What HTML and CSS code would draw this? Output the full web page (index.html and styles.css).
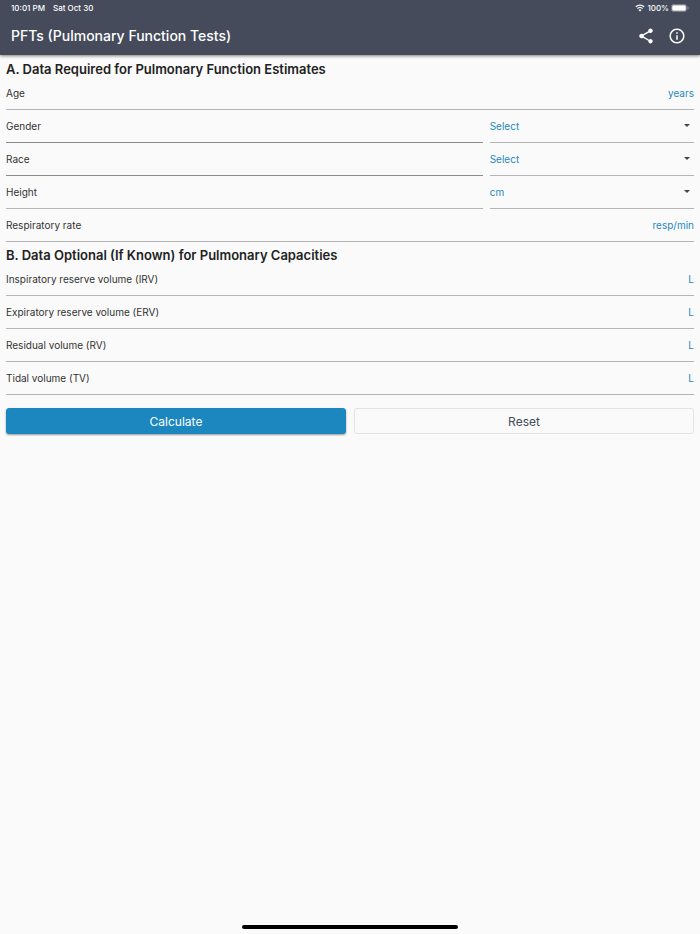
FILE: index.html
```html
<!DOCTYPE html>
<html lang="en">
<head>
  <meta charset="UTF-8" />
  <meta name="viewport" content="width=device-width, initial-scale=1.0"/>
  <title>PFTs (Pulmonary Function Tests)</title>
  <link rel="stylesheet" href="styles.css">
</head>
<body>
  <header class="app-header">
    <div class="status-bar">
      <span>10:01 PM</span>
      <span>Sat Oct 30</span>
      <div class="status-right">
        <svg class="wifi" viewBox="0 0 20 15" fill="none" stroke="#fff" stroke-width="2.4">
          <path d="M1.5 5.4a12 12 0 0 1 17 0"/>
          <path d="M4.8 8.8a7.4 7.4 0 0 1 10.4 0"/>
          <path d="M10 14.6l-3.1-3.1a4.4 4.4 0 0 1 6.2 0z" fill="#fff" stroke="none"/>
        </svg>
        <span>100%</span>
        <svg class="battery" viewBox="0 0 36 16">
          <rect x="0.8" y="0.8" width="30.4" height="14.4" rx="4.2" fill="none" stroke="#9a9ea8" stroke-width="1.4"/>
          <rect x="2.4" y="2.4" width="27.2" height="11.2" rx="2.6" fill="#fff"/>
          <path d="M33 5.4c1.8.6 2.2 1.6 2.2 2.6s-.4 2-2.2 2.6z" fill="#9a9ea8"/>
        </svg>
      </div>
    </div>
    <div class="toolbar">
      <h1>PFTs (Pulmonary Function Tests)</h1>
      <button type="button" class="icon-btn" aria-label="Share">
        <svg viewBox="0 0 24 24" fill="#fff">
          <path d="M18 16.08c-.76 0-1.44.3-1.96.77L8.91 12.7c.05-.23.09-.46.09-.7s-.04-.47-.09-.7l7.05-4.11c.54.5 1.25.81 2.04.81 1.66 0 3-1.34 3-3s-1.34-3-3-3-3 1.34-3 3c0 .24.04.47.09.7L8.04 9.81C7.5 9.31 6.79 9 6 9c-1.66 0-3 1.34-3 3s1.34 3 3 3c.79 0 1.5-.31 2.04-.81l7.12 4.16c-.05.21-.08.43-.08.65 0 1.61 1.31 2.92 2.92 2.92s2.92-1.31 2.92-2.92-1.31-2.92-2.92-2.92z"/>
        </svg>
      </button>
      <button type="button" class="icon-btn" aria-label="Info">
        <svg viewBox="0 0 24 24" fill="#fff">
          <path d="M11 7h2v2h-2zm0 4h2v6h-2zm1-9C6.48 2 2 6.48 2 12s4.48 10 10 10 10-4.48 10-10S17.52 2 12 2zm0 18c-4.41 0-8-3.59-8-8s3.59-8 8-8 8 3.59 8 8-3.59 8-8 8z"/>
        </svg>
      </button>
    </div>
  </header>

  <main>
    <form>
      <h2>A. Data Required for Pulmonary Function Estimates</h2>
      <div class="row">
        <div class="field">
          <label for="age">Age</label>
          <input type="text" id="age" inputmode="numeric">
          <span class="unit">years</span>
        </div>
      </div>
      <div class="row">
        <div class="field dark">
          <label for="gender">Gender</label>
        </div>
        <div class="field choice">
          <select id="gender">
            <option>Select</option>
            <option>Male</option>
            <option>Female</option>
          </select>
          <svg class="arrow" viewBox="0 0 6 4"><path d="M0 0h6L3 3z"/></svg>
        </div>
      </div>
      <div class="row">
        <div class="field dark">
          <label for="race">Race</label>
        </div>
        <div class="field choice">
          <select id="race">
            <option>Select</option>
          </select>
          <svg class="arrow" viewBox="0 0 6 4"><path d="M0 0h6L3 3z"/></svg>
        </div>
      </div>
      <div class="row">
        <div class="field">
          <label for="height">Height</label>
          <input type="text" id="height" inputmode="numeric">
        </div>
        <div class="field choice">
          <select id="height-unit" aria-label="Height unit">
            <option>cm</option>
            <option>in</option>
          </select>
          <svg class="arrow" viewBox="0 0 6 4"><path d="M0 0h6L3 3z"/></svg>
        </div>
      </div>
      <div class="row">
        <div class="field">
          <label for="rate">Respiratory rate</label>
          <input type="text" id="rate" inputmode="numeric">
          <span class="unit">resp/min</span>
        </div>
      </div>

      <h2>B. Data Optional (If Known) for Pulmonary Capacities</h2>
      <div class="row">
        <div class="field">
          <label for="irv">Inspiratory reserve volume (IRV)</label>
          <input type="text" id="irv" inputmode="decimal">
          <span class="unit">L</span>
        </div>
      </div>
      <div class="row">
        <div class="field">
          <label for="erv">Expiratory reserve volume (ERV)</label>
          <input type="text" id="erv" inputmode="decimal">
          <span class="unit">L</span>
        </div>
      </div>
      <div class="row">
        <div class="field">
          <label for="rv">Residual volume (RV)</label>
          <input type="text" id="rv" inputmode="decimal">
          <span class="unit">L</span>
        </div>
      </div>
      <div class="row">
        <div class="field">
          <label for="tv">Tidal volume (TV)</label>
          <input type="text" id="tv" inputmode="decimal">
          <span class="unit">L</span>
        </div>
      </div>

      <div class="actions">
        <button type="button" class="btn primary">Calculate</button>
        <button type="reset" class="btn">Reset</button>
      </div>
    </form>
  </main>

  <div class="home-bar"></div>
</body>
</html>
```

FILE: styles.css
```css
* {
  box-sizing: border-box;
}
body {
  margin: 0;
  min-height: 100vh;
  display: flex;
  flex-direction: column;
  background: #fafafa;
  color: #333;
  font-family: Inter, Roboto, sans-serif;
  font-size: 10px;
}
button, input, select {
  font: inherit;
}

/* header */
.app-header {
  background: #454b5b;
  color: #fff;
  box-shadow: 0 1px 3px rgba(0,0,0,0.5);
}
.status-bar {
  display: flex;
  align-items: center;
  gap: 8px;
  height: 16px;
  padding: 0 11px;
  font-size: 8px;
  font-weight: 500;
}
.status-right {
  display: flex;
  align-items: center;
  gap: 2px;
  margin-left: auto;
}
.wifi {
  width: 10px;
  height: 8px;
}
.battery {
  width: 18px;
  height: 8px;
}
.toolbar {
  display: flex;
  align-items: center;
  gap: 13px;
  height: 39px;
  padding: 0 14px 0 11px;
}
h1 {
  flex: 1;
  margin: 0;
  font-size: 14px;
  font-weight: 500;
}
.icon-btn {
  padding: 0;
  border: none;
  background: none;
  cursor: pointer;
}
.icon-btn svg {
  display: block;
  width: 18px;
  height: 18px;
}

/* form */
main {
  flex: 1;
  padding: 1px 6px 0;
}
h2 {
  margin: 0;
  padding-top: 6px;
  font-size: 13px;
  line-height: 15px;
  font-weight: 600;
  color: #222;
}
.row {
  display: flex;
  gap: 7px;
}
.field {
  flex: 7;
  display: flex;
  align-items: center;
  height: 33px;
  padding-bottom: 1px;
  border-bottom: 1px solid #b4b4b4;
}
.field.dark {
  border-color: #8c8c8c;
}
.field input {
  flex: 1;
  min-width: 0;
  padding: 0 8px;
  border: none;
  outline: none;
  background: none;
  text-align: right;
}
.unit {
  color: #2489bd;
}
.field.choice {
  flex: 3;
}
.choice select {
  flex: 1;
  padding: 0;
  border: none;
  outline: none;
  appearance: none;
  background: none;
  color: #2489bd;
}
.arrow {
  width: 6px;
  height: 4px;
  margin-right: 4px;
  fill: #444;
  pointer-events: none;
}

/* buttons */
.actions {
  display: flex;
  gap: 8px;
  margin-top: 13px;
}
.btn {
  flex: 1;
  height: 26px;
  padding: 0;
  border: 1px solid #e3e3e5;
  border-radius: 3px;
  background: #fafafa;
  color: #454b5b;
  font-size: 12px;
  cursor: pointer;
}
.primary {
  border-color: #1c87be;
  background: #1c87be;
  color: #fff;
  box-shadow: 0 1px 2px rgba(0,0,0,0.4);
}

.home-bar {
  align-self: center;
  width: 216px;
  height: 4px;
  margin-bottom: 5px;
  border-radius: 2px;
  background: #000;
}
```
